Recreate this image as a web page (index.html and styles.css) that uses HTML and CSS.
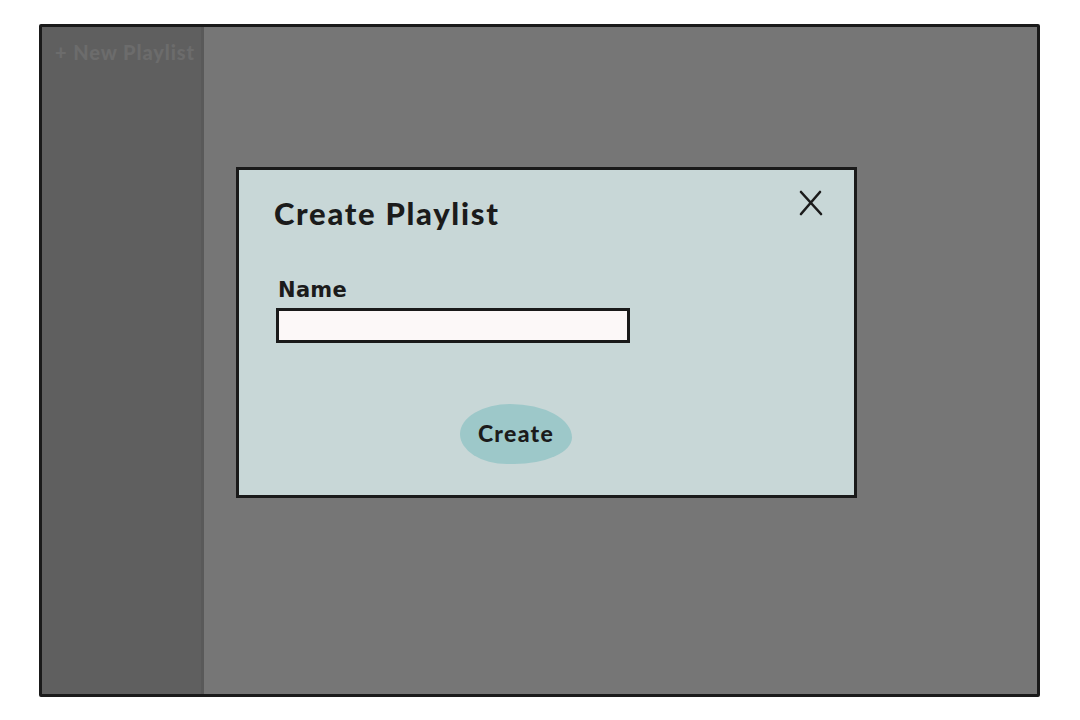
FILE: index.html
```html
<!DOCTYPE html>
<html>
<head>
<meta charset="utf-8">
<link rel="stylesheet" href="styles.css">
</head>
<body>
<div class="frame">
  <aside class="sidebar">
    <div class="new-playlist">+ New Playlist</div>
  </aside>
  <main class="main"></main>
  <div class="modal">
    <div class="modal-head">
      <h1 class="modal-title">Create Playlist</h1>
      <button class="close" aria-label="Close">
        <svg width="26" height="26" viewBox="0 0 26 26"><path d="M3 2 L23 24 M22 2 L3 24" stroke="#1b1b1b" stroke-width="2.6" stroke-linecap="round" fill="none"/></svg>
      </button>
    </div>
    <label class="field-label">Name</label>
    <div class="input"></div>
    <div class="actions">
      <button class="create">Create</button>
    </div>
  </div>
</div>
</body>
</html>
```
FILE: styles.css
```css
html, body {
  margin: 0;
  padding: 0;
  background: #ffffff;
}
body {
  padding: 24px 0 0 39px;
  font-family: "Lato", "DejaVu Sans", sans-serif;
}
.frame {
  position: relative;
  width: 1001px;
  height: 673px;
  box-sizing: border-box;
  border: 3px solid #1a1a1a;
  border-radius: 2px;
  display: flex;
  background: #767676;
}
.sidebar {
  width: 162px;
  box-sizing: border-box;
  background: #5f5f5f;
  border-right: 3px solid #595959;
  padding: 15px 0 0 13px;
}
.new-playlist {
  color: #6c6c6c;
  font-weight: 900;
  font-size: 20px;
  line-height: 1;
  letter-spacing: 0.9px;
  white-space: nowrap;
}
.main {
  flex: 1;
  background: #767676;
}
.modal {
  position: absolute;
  left: 194px;
  top: 140px;
  width: 621px;
  height: 331px;
  box-sizing: border-box;
  background: #c8d7d7;
  border: 3px solid #1a1a1a;
  padding: 28px 30px 0 35px;
}
.modal-head {
  display: flex;
  justify-content: space-between;
  align-items: flex-start;
}
.modal-title {
  margin: 0;
  font-size: 31px;
  font-weight: 900;
  color: #1b1b1b;
  line-height: 1;
  letter-spacing: 1.7px;
}
.close {
  background: none;
  border: none;
  padding: 0;
  margin-top: -8px;
  width: 26px;
  height: 26px;
}
.field-label {
  display: block;
  margin: 51px 0 0 4px;
  font-family: "DejaVu Sans", sans-serif;
  font-size: 21px;
  font-weight: 700;
  color: #1b1b1b;
  line-height: 1;
  letter-spacing: 0.3px;
}
.input {
  margin: 7px 0 0 2px;
  width: 354px;
  height: 35px;
  box-sizing: border-box;
  background: #fcf8f8;
  border: 3px solid #1a1a1a;
}
.actions {
  margin-top: 61px;
  padding-left: 186px;
}
.create {
  width: 112px;
  height: 60px;
  border: none;
  background: #9dc8c9;
  border-radius: 45% 55% 52% 42% / 50% 56% 44% 50%;
  font-family: "Lato", "DejaVu Sans", sans-serif;
  font-size: 23px;
  font-weight: 900;
  color: #1b1b1b;
  letter-spacing: 1.3px;
  padding: 0 0 2px 0;
}
```
